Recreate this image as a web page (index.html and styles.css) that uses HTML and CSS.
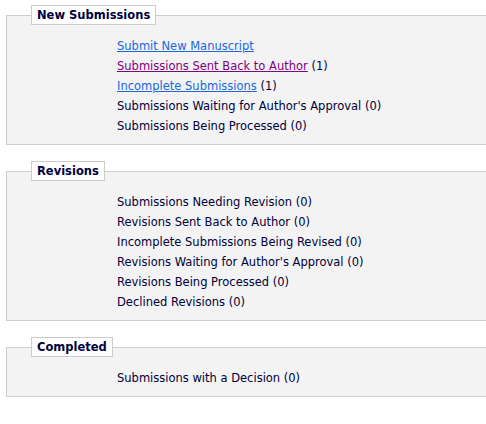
FILE: index.html
```html
<!DOCTYPE html>
<html>
<head>
<meta charset="utf-8">
<link rel="stylesheet" href="styles.css">
</head>
<body>
<div class="page">
  <fieldset class="box">
    <legend class="box-title">New Submissions</legend>
    <ul class="list">
      <li><a class="link" href="#">Submit New Manuscript</a></li>
      <li><a class="link visited" href="#">Submissions Sent Back to Author</a> (1)</li>
      <li><a class="link" href="#">Incomplete Submissions</a> (1)</li>
      <li>Submissions Waiting for Author's Approval (0)</li>
      <li>Submissions Being Processed (0)</li>
    </ul>
  </fieldset>
  <fieldset class="box">
    <legend class="box-title">Revisions</legend>
    <ul class="list">
      <li>Submissions Needing Revision (0)</li>
      <li>Revisions Sent Back to Author (0)</li>
      <li>Incomplete Submissions Being Revised (0)</li>
      <li>Revisions Waiting for Author's Approval (0)</li>
      <li>Revisions Being Processed (0)</li>
      <li>Declined Revisions (0)</li>
    </ul>
  </fieldset>
  <fieldset class="box">
    <legend class="box-title">Completed</legend>
    <ul class="list">
      <li>Submissions with a Decision (0)</li>
    </ul>
  </fieldset>
</div>
</body>
</html>
```
FILE: styles.css
```css
html, body {
  margin: 0;
  padding: 0;
  background: #ffffff;
}
body {
  font-family: "DejaVu Sans", Verdana, sans-serif;
  font-size: 11.5px;
  color: #00003a;
}
.page {
  width: 480px;
  margin-left: 6px;
  padding-top: 5px;
  overflow: hidden;
  display: flex;
  flex-direction: column;
  gap: 16px;
}
.box {
  width: 482px;
  box-sizing: border-box;
  margin: 0;
  border: 1px solid #cccccc;
  background: #f3f3f3;
  padding: 11px 0 8px 0;
  min-width: 0;
}
.box-title {
  margin-left: 24px;
  padding: 0 5px;
  background: #ffffff;
  border: 1px solid #cccccc;
  font-weight: bold;
  font-size: 11.5px;
  line-height: 18px;
  color: #000040;
}
.list {
  list-style: none;
  margin: 0;
  padding: 0 0 0 110px;
}
.list li {
  line-height: 20px;
  white-space: nowrap;
}
.link {
  color: #1a66dd;
  text-decoration: underline;
}
.link.visited {
  color: #800080;
}
```
